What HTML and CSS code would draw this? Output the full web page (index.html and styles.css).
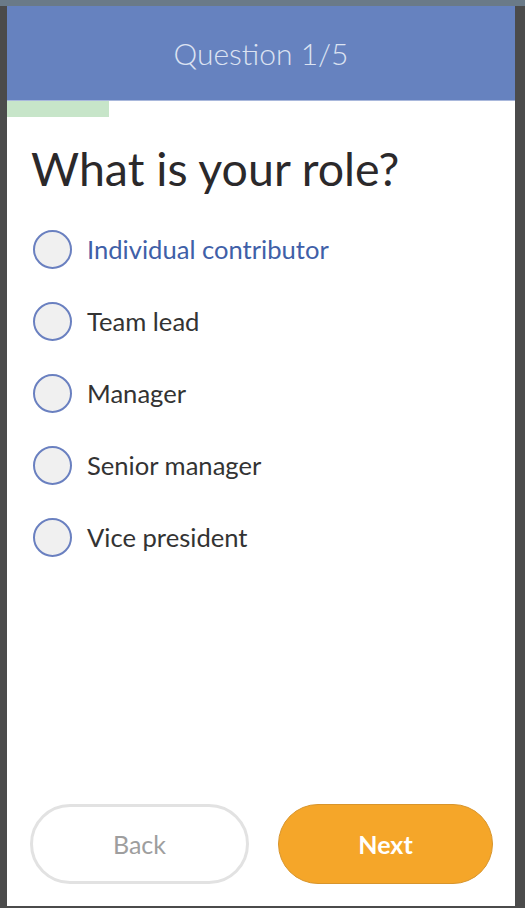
FILE: index.html
```html
<!DOCTYPE html>
<html lang="en">
<head>
    <meta charset="UTF-8">
    <title>Quiz - Question 1/5</title>
    <link rel="stylesheet" href="styles.css">
</head>
<body>

<div class="topbar"></div>

<div class="app">
    <div class="header">Question 1/5</div>
    <div class="progress"><div class="progress-fill"></div></div>

    <h1 class="question">What is your role?</h1>

    <div class="options">
        <label class="option active"><span class="radio"></span>Individual contributor</label>
        <label class="option"><span class="radio"></span>Team lead</label>
        <label class="option"><span class="radio"></span>Manager</label>
        <label class="option"><span class="radio"></span>Senior manager</label>
        <label class="option"><span class="radio"></span>Vice president</label>
    </div>

    <div class="buttons">
        <button class="btn back">Back</button>
        <button class="btn next">Next</button>
    </div>
</div>

</body>
</html>
```

FILE: styles.css
```css
html, body {
    margin: 0;
    padding: 0;
}
body {
    background-color: #4b4b4b;
    font-family: Lato, "Noto Sans", sans-serif;
    height: 908px;
    overflow: hidden;
}
.topbar {
    height: 6px;
    background-color: #6a7a88;
}
.app {
    margin: 0 10px 0 7px;
    height: 900px;
    background-color: white;
    display: flex;
    flex-direction: column;
}
.header {
    height: 94px;
    background-color: #6682bf;
    color: #dce3f2;
    font-size: 30px;
    font-weight: 300;
    display: flex;
    align-items: center;
    justify-content: center;
}
.progress {
    height: 16px;
    border-top: 1px solid #a9b8dc;
}
.progress-fill {
    width: 20%;
    height: 100%;
    background-color: #c7e5c9;
}
.question {
    margin: 23px 0 0 0;
    padding: 0 24px;
    font-size: 46.5px;
    line-height: 56px;
    font-weight: 400;
    color: #2b292b;
}
.options {
    margin-top: 17px;
    padding: 0 26px;
}
.option {
    height: 72px;
    display: flex;
    align-items: center;
    font-size: 25.6px;
    color: #333;
    cursor: pointer;
}
.option.active {
    color: #3f60a8;
}
.radio {
    width: 35px;
    height: 35px;
    border: 2px solid #6a80c0;
    border-radius: 50%;
    background-color: #f0f0f0;
    margin-right: 15px;
}
.buttons {
    margin-top: auto;
    padding: 0 22px 22px 23px;
    display: flex;
    gap: 29px;
}
.btn {
    flex: 1;
    height: 80px;
    border-radius: 40px;
    font-family: Lato, "Noto Sans", sans-serif;
    font-size: 25px;
    cursor: pointer;
}
.back {
    background-color: white;
    border: 3px solid #e2e2e2;
    color: #9e9e9e;
}
.next {
    background-color: #f5a629;
    border: 1px solid #d8952c;
    color: white;
    font-weight: 700;
}
```
